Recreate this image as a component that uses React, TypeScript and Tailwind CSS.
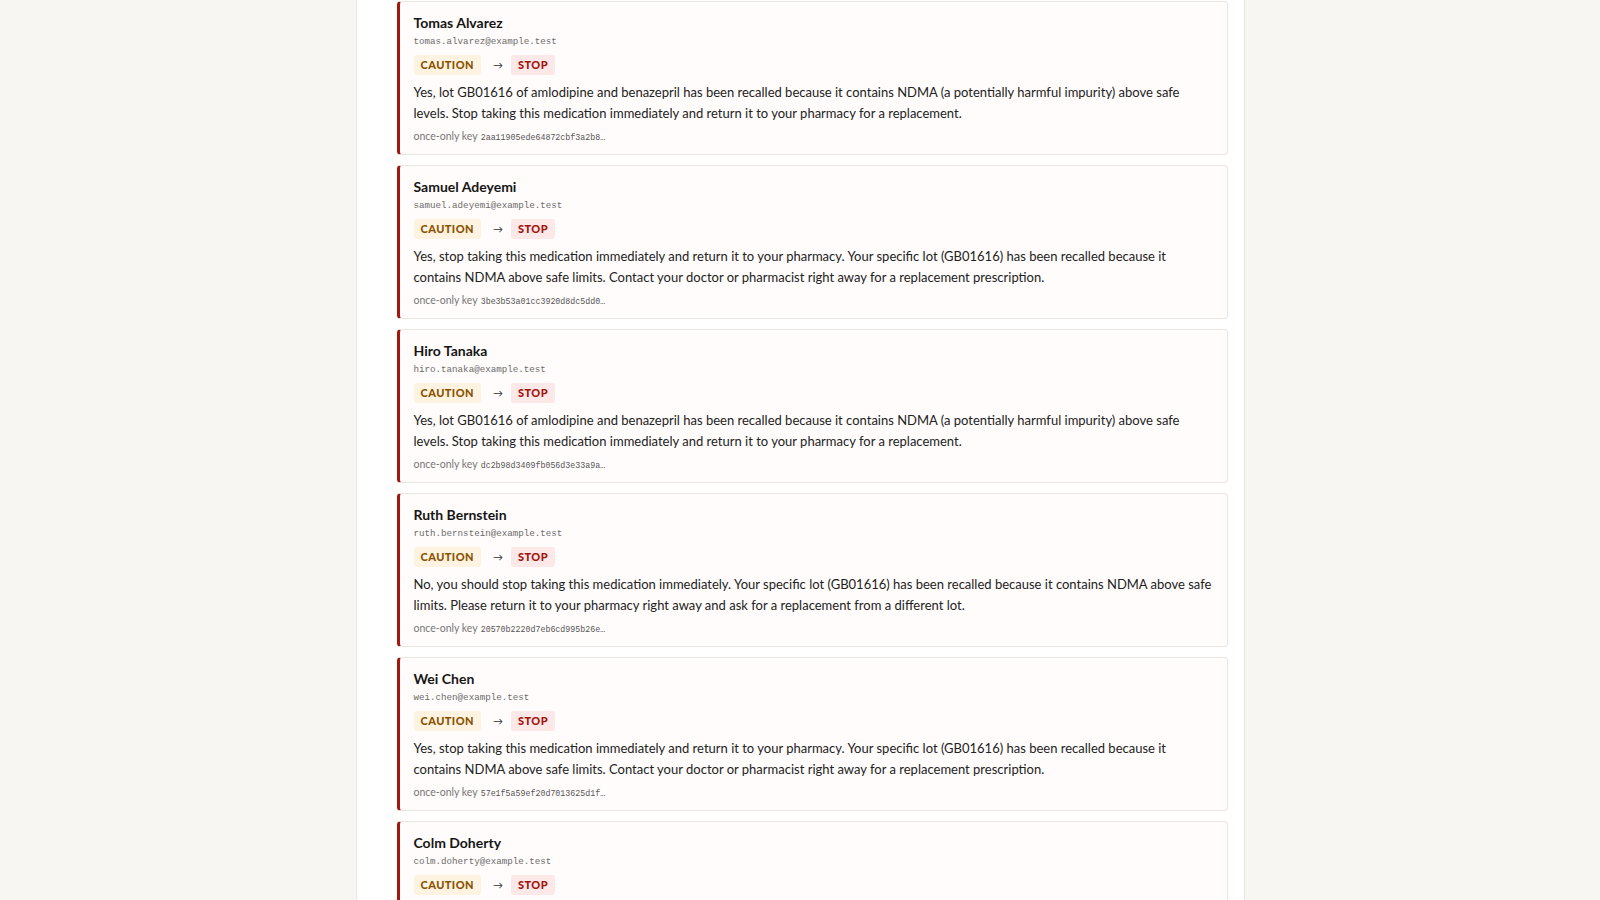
const TEXT_A =
  "Yes, lot GB01616 of amlodipine and benazepril has been recalled because it contains NDMA (a potentially harmful impurity) above safe levels. Stop taking this medication immediately and return it to your pharmacy for a replacement."
const TEXT_B =
  "Yes, stop taking this medication immediately and return it to your pharmacy. Your specific lot (GB01616) has been recalled because it contains NDMA above safe limits. Contact your doctor or pharmacist right away for a replacement prescription."
const TEXT_C =
  "No, you should stop taking this medication immediately. Your specific lot (GB01616) has been recalled because it contains NDMA above safe limits. Please return it to your pharmacy right away and ask for a replacement from a different lot."

const patients = [
  { name: "Tomas Alvarez", email: "tomas.alvarez@example.test", reply: TEXT_A, key: "2aa11905ede64872cbf3a2b8" },
  { name: "Samuel Adeyemi", email: "samuel.adeyemi@example.test", reply: TEXT_B, key: "3be3b53a01cc3920d8dc5dd0" },
  { name: "Hiro Tanaka", email: "hiro.tanaka@example.test", reply: TEXT_A, key: "dc2b98d3409fb056d3e33a9a" },
  { name: "Ruth Bernstein", email: "ruth.bernstein@example.test", reply: TEXT_C, key: "20570b2220d7eb6cd995b26e" },
  { name: "Wei Chen", email: "wei.chen@example.test", reply: TEXT_B, key: "57e1f5a59ef20d7013625d1f" },
  { name: "Colm Doherty", email: "colm.doherty@example.test", reply: TEXT_A, key: "8f04c1d27ab93e5510c6e7d4" },
]

function Badge({ label, tone }: { label: string; tone: "caution" | "stop" }) {
  return (
    <span
      className={
        tone === "caution"
          ? "inline-flex h-[20px] items-center rounded-[3px] bg-[#fdf3e0] px-[7px] text-[11px] font-black tracking-[0.04em] text-[#8a5200]"
          : "inline-flex h-[20px] items-center rounded-[3px] bg-[#fde8e8] px-[7px] text-[11px] font-black tracking-[0.04em] text-[#a3120f]"
      }
    >
      {label}
    </span>
  )
}

function RecallCard({ p }: { p: (typeof patients)[number] }) {
  return (
    <div className="rounded-[4px] border border-l-[3px] border-[#e9e6e0] border-l-[#a3170f] bg-[#fffcfb] pb-[10px] pl-[14px] pr-[14px] pt-[11px]">
      <div className="text-[14px] font-bold leading-[20px] text-[#161616]">{p.name}</div>
      <div className="mt-[2px] h-[14px] font-['Liberation_Mono',monospace] text-[9.2px] leading-[14px] text-[#6b6b6b]">
        {p.email}
      </div>
      <div className="mt-[6px] flex h-[20px] items-center">
        <Badge label="CAUTION" tone="caution" />
        <span className="w-[30px] pl-[12px] text-[10px] leading-[20px] text-[#333]">→</span>
        <Badge label="STOP" tone="stop" />
      </div>
      <p className="mt-[7px] text-[13px] leading-[20.5px] text-[#222]">{p.reply}</p>
      <div className="mt-[5px] flex h-[16px] items-baseline gap-[3px] text-[10.5px] leading-[16px] text-[#777]">
        <span>once-only key</span>
        <span className="font-['Liberation_Mono',monospace] text-[8.3px] text-[#555]">{p.key}…</span>
      </div>
    </div>
  )
}

export default function App() {
  return (
    <div className="min-h-screen bg-[#f7f6f3] font-['Lato',sans-serif]">
      <main className="mx-auto min-h-screen w-[889px] border-x border-[#e9e7e2] bg-white px-4">
        <div className="ml-6 flex flex-col gap-[10px] pb-10 pt-px">
          {patients.map((p) => (
            <RecallCard key={p.email} p={p} />
          ))}
        </div>
      </main>
    </div>
  )
}
